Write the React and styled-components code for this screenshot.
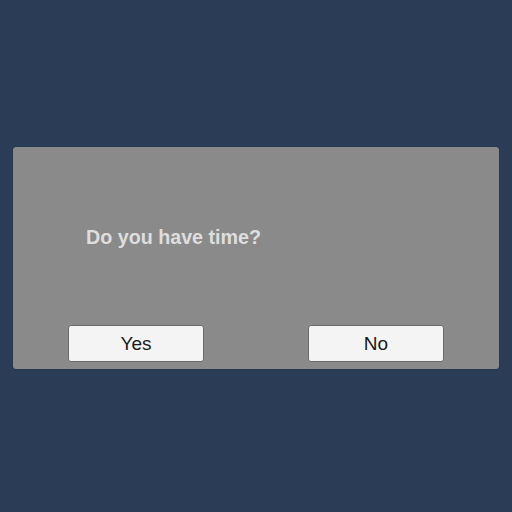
import styled, { createGlobalStyle } from 'styled-components'

const Global = createGlobalStyle`
body {
  margin: 0;
  background: #2b3c57;
  font-family: "Liberation Sans", Arial, sans-serif;
}
`

export default function App() {
    return (
        <Page>
            <Global />
            <Dialog>
                <Message>Do you have time?</Message>
                <Actions>
                    <Button>Yes</Button>
                    <Button>No</Button>
                </Actions>
            </Dialog>
        </Page>
    )
}

const Page = styled.div`
height: 512px;
box-sizing: border-box;
padding: 147px 0 0 13px;
`

const Dialog = styled.div`
width: 486px;
height: 222px;
box-sizing: border-box;
background: #8a8a8a;
border-radius: 3px;
box-shadow: 0 0 1px rgba(0, 0, 0, 0.5);
display: flex;
flex-direction: column;
padding: 0 55px 7px 55px;
`

const Message = styled.div`
flex: 1;
display: flex;
align-items: center;
padding-left: 18px;
padding-top: 2px;
font-size: 19.7px;
font-weight: bold;
color: #dedede;
`

const Actions = styled.div`
display: flex;
justify-content: space-between;
`

const Button = styled.button`
width: 136px;
height: 37px;
background: #f4f4f4;
border: 1px solid #6a6a6a;
border-radius: 3px;
font-family: "Liberation Sans", Arial, sans-serif;
font-size: 19px;
color: #1a1a1a;
padding: 0;
`
